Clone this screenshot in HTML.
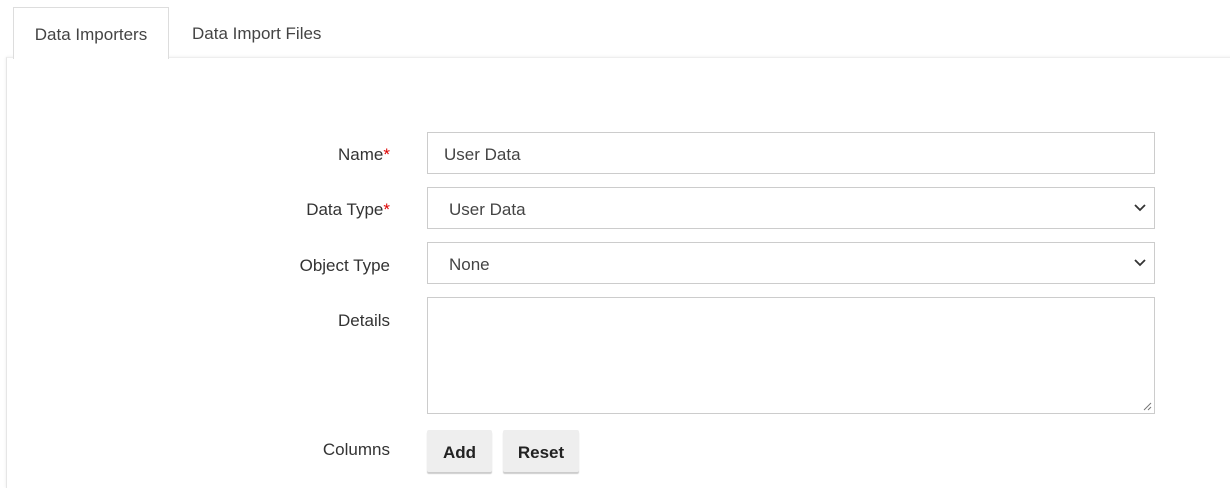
<!DOCTYPE html>
<html><head><style>
body{margin:0;width:1230px;height:481px;background:#fff;font-family:"Liberation Sans",sans-serif;font-size:17px;color:#333;position:relative;overflow:hidden}
.a{position:absolute}
.tab{left:13px;top:7px;width:154px;height:51px;border:1px solid #ddd;border-bottom:none;background:#fff;z-index:2;line-height:54px;text-align:center;color:#444}
.tab2{left:192px;top:7px;line-height:54px;color:#444}
.panel{left:6px;top:57px;width:1230px;height:430px;border-left:1px solid #e6e6e6;border-top:1px solid #eee;box-shadow:0 0 3px rgba(0,0,0,.08)}
.lbl{right:840px;text-align:right;color:#333}
.lbl b{color:#d00;font-weight:normal}
.in{left:427px;width:728px;border:1px solid #ccc;color:#444;box-sizing:border-box;height:42px;line-height:43px;padding-left:16px}
.btn{top:430px;height:42px;background:#eee;border-radius:2px;box-shadow:0 2px 1px rgba(0,0,0,.2);font-weight:bold;line-height:45px;text-align:center;color:#222;font-size:17px}
</style></head><body>
<div class="a panel"></div>
<div class="a tab">Data Importers</div>
<div class="a tab2">Data Import Files</div>
<div class="a lbl" style="top:145px">Name<b>*</b></div>
<div class="a lbl" style="top:200px">Data Type<b>*</b></div>
<div class="a lbl" style="top:256px">Object Type</div>
<div class="a lbl" style="top:311px">Details</div>
<div class="a lbl" style="top:440px">Columns</div>
<div class="a in" style="top:132px">User Data</div>
<div class="a in" style="top:187px;padding-left:21px">User Data<svg class="a" style="right:8px;top:16px" width="12" height="8"><path d="M1 1l5 5 5-5" stroke="#333" stroke-width="1.8" fill="none"/></svg></div>
<div class="a in" style="top:242px;padding-left:21px">None<svg class="a" style="right:8px;top:16px" width="12" height="8"><path d="M1 1l5 5 5-5" stroke="#333" stroke-width="1.8" fill="none"/></svg></div>
<div class="a in" style="top:297px;height:117px"><svg class="a" style="right:2px;bottom:2px" width="9" height="9"><path d="M8 1L1 8M8 5L5 8" stroke="#777"/></svg></div>
<div class="a btn" style="left:427px;width:65px">Add</div>
<div class="a btn" style="left:503px;width:76px">Reset</div>
</body></html>
